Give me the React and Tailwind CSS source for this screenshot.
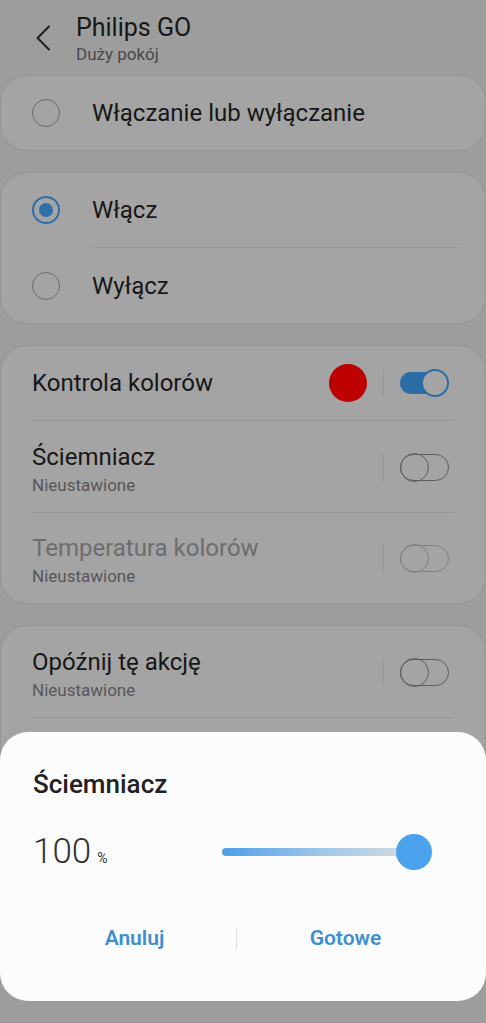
import React from "react";

const Radio = ({ checked }) =>
  checked ? (
    <span className="flex h-[28px] w-[28px] shrink-0 items-center justify-center rounded-full border-2 border-[#2f6fa7]">
      <span className="h-[14px] w-[14px] rounded-full bg-[#2f6fa7]" />
    </span>
  ) : (
    <span className="h-[28px] w-[28px] shrink-0 rounded-full border-[1.5px] border-[#6b6b6b]" />
  );

const Toggle = ({ on, faded }) =>
  on ? (
    <span className="relative block h-[30px] w-[49px]">
      <span className="absolute left-0 right-[8px] top-[4px] h-[22px] rounded-full bg-[#2d6da5]" />
      <span className="absolute right-0 top-[1px] h-[28px] w-[28px] rounded-full border-2 border-[#2d6da5] bg-[#a4a4a4]" />
    </span>
  ) : (
    <span className={"relative block h-[30px] w-[49px] " + (faded ? "opacity-50" : "")}>
      <span className="absolute inset-x-0 top-[2px] h-[27px] rounded-full border-[1.5px] border-[#5e5e5e]" />
      <span className="absolute left-0 top-[1px] h-[29px] w-[29px] rounded-full border-[1.5px] border-[#5e5e5e]" />
    </span>
  );

const VLine = () => <span className="mx-[16px] h-[28px] w-px bg-[#979797]" />;

const Divider = () => <div className="mx-[31px] h-px bg-[#969696]" />;

const Card = ({ className = "", children }) => (
  <div className={"mx-[1px] rounded-[26px] bg-[#a4a4a4] shadow-[0_0_0_1px_rgba(0,0,0,0.05)] " + className}>
    {children}
  </div>
);

const SettingRow = ({ title, sub, disabled, toggle, h = "h-[91px]" }) => (
  <div className={"flex items-center pl-[31px] pr-[36px] " + h}>
    <div className="flex-1 pt-[8px]">
      <div className={"text-[24px] leading-[28px] " + (disabled ? "text-[#6d6d6d]" : "text-[#171717]")}>
        {title}
      </div>
      <div className="text-[17px] leading-[28px] text-[#575757]">{sub}</div>
    </div>
    <VLine />
    {toggle}
  </div>
);

export default function App() {
  return (
    <div
      className="relative h-[1023px] overflow-hidden bg-[#9d9d9d]"
      style={{ fontFamily: "Roboto, 'Noto Sans', sans-serif" }}
    >
      {/* header */}
      <div className="flex h-[76px] items-start pl-[35px] pt-[13px]">
        <svg width="16" height="26" viewBox="0 0 16 26" className="mt-[12px]">
          <path d="M14 1.5 L2.5 13 L14 24.5" fill="none" stroke="#1c1c1c" strokeWidth="2" strokeLinecap="round" strokeLinejoin="round" />
        </svg>
        <div className="ml-[25px]">
          <div className="text-[25px] leading-[30px] text-[#171717]">Philips GO</div>
          <div className="text-[17px] leading-[22px] text-[#484848]">Duży pokój</div>
        </div>
      </div>

      {/* on/off */}
      <Card className="flex h-[74px] items-center pl-[31px]">
        <Radio />
        <span className="ml-[32px] text-[24px] text-[#171717]">Włączanie lub wyłączanie</span>
      </Card>

      <Card className="mt-[23px]">
        <div className="flex h-[74px] items-center pl-[31px]">
          <Radio checked />
          <span className="ml-[32px] text-[24px] text-[#171717]">Włącz</span>
        </div>
        <div className="ml-[91px] mr-[26px] h-px bg-[#969696]" />
        <div className="flex h-[75px] items-center pl-[31px]">
          <Radio />
          <span className="ml-[32px] text-[24px] text-[#171717]">Wyłącz</span>
        </div>
      </Card>

      {/* controls */}
      <Card className="mt-[23px]">
        <div className="flex h-[74px] items-center pl-[31px] pr-[36px]">
          <span className="flex-1 text-[24px] text-[#171717]">Kontrola kolorów</span>
          <span className="h-[38px] w-[38px] rounded-full bg-[#bd0000]" />
          <VLine />
          <Toggle on />
        </div>
        <Divider />
        <SettingRow title="Ściemniacz" sub="Nieustawione" toggle={<Toggle />} />
        <Divider />
        <SettingRow title="Temperatura kolorów" sub="Nieustawione" disabled toggle={<Toggle faded />} h="h-[90px]" />
      </Card>

      <Card className="mt-[23px]">
        <SettingRow title="Opóźnij tę akcję" sub="Nieustawione" toggle={<Toggle />} />
        <Divider />
        <SettingRow title="Powiadomienie" sub="Nieustawione" toggle={<Toggle />} />
      </Card>

      {/* dimmer dialog */}
      <div className="absolute inset-x-0 top-[732px] rounded-[28px] bg-[#fcfcfc] px-[33px] pb-[47px] pt-[36px]">
        <div className="text-[26px] font-medium leading-[32px] text-[#222222]">Ściemniacz</div>
        <div className="mt-[32px] flex h-[40px] items-center">
          <div className="flex w-[189px] items-baseline text-[#333333]">
            <span className="text-[35px] font-light leading-[40px]">100</span>
            <span className="ml-[6px] text-[14px]">%</span>
          </div>
          <div className="relative h-[36px] w-[210px]">
            <span className="absolute left-0 right-[20px] top-[14px] h-[8px] rounded-full bg-gradient-to-r from-[#4a9fe8] via-[#9cc5e6] to-[#d4dde4]" />
            <span className="absolute right-0 top-0 h-[36px] w-[36px] rounded-full bg-[#4aa2ec]" />
          </div>
        </div>
        <div className="mt-[52px] flex h-[30px] w-[421px] items-center">
          <button className="w-[203px] text-center text-[21px] font-semibold text-[#3e8fd1]">Anuluj</button>
          <span className="h-[22px] w-px bg-[#dddddd]" />
          <button className="flex-1 text-center text-[21px] font-semibold text-[#3e8fd1]">Gotowe</button>
        </div>
      </div>
    </div>
  );
}
